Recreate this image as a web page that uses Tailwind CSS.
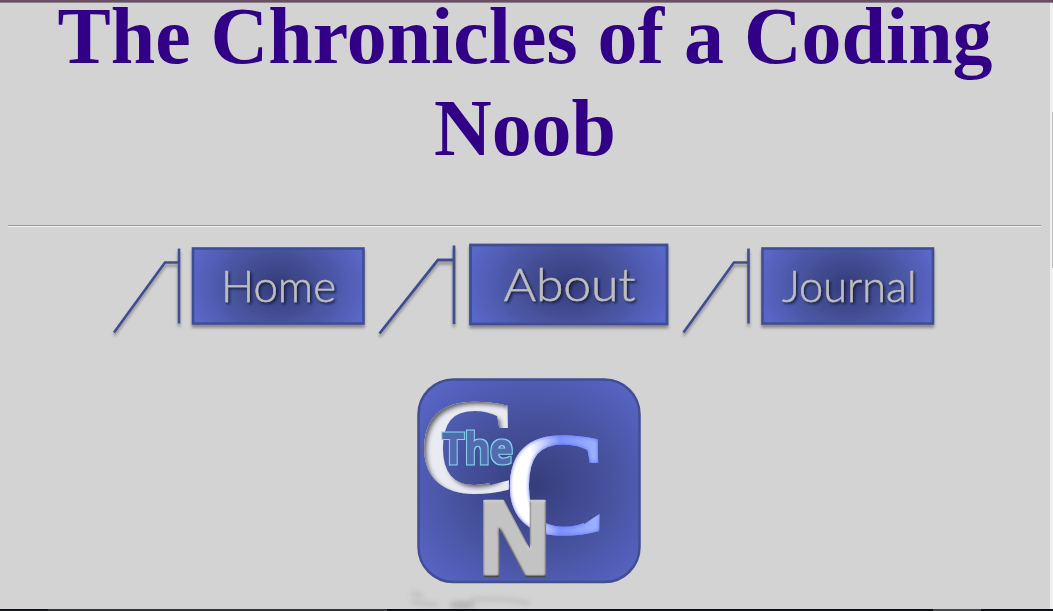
<!DOCTYPE html>
<html lang="en">
<head>
<meta charset="utf-8">
<title>The Chronicles of a Coding Noob</title>
<script src="https://cdn.jsdelivr.net/npm/@tailwindcss/browser@4"></script>
</head>
<body class="h-[611px] overflow-hidden bg-[#d3d3d3] flex flex-col">
<div class="h-[3px] shrink-0 bg-[#694f64] border-b border-[#8c7f8b]"></div>
<div class="flex h-[606px] shrink-0">
<main class="flex-1 flex flex-col">
<h1 class="h-[222px] shrink-0 px-2 -mt-[13px] text-center text-[79.9px] leading-[92px] font-bold text-[#310087] font-['Liberation_Serif',serif]">The Chronicles of a Coding Noob</h1>
<hr class="mt-[13px] ml-2 mr-[9px] h-[2px] shrink-0 border-0 border-t border-t-[#9a9a9a] bg-[#eeeeee]">
<nav class="mt-[8px] ml-[100px] h-[110px] shrink-0 flex">
<svg class="w-[270px] h-[110px] shrink-0" viewBox="100 235 270 110">
<defs>
<radialGradient id="g" cx=".5" cy=".5" r=".53" gradientTransform="translate(0 -.4) scale(1 1.8)"><stop offset="0" stop-color="#343b7b"/><stop offset=".45" stop-color="#455097"/><stop offset="1" stop-color="#5967c8"/></radialGradient>
<filter id="s" x="-20%" y="-20%" width="140%" height="150%"><feDropShadow dx="0" dy="3" stdDeviation="1.5" flood-opacity=".35"/></filter>
<filter id="t" x="-20%" y="-20%" width="140%" height="150%"><feDropShadow dx="1.8" dy="1.8" stdDeviation=".9" flood-color="#111633" flood-opacity=".85"/></filter>
</defs>
<g fill="none" stroke="#414e93" stroke-width="2.6" filter="url(#s)"><path d="M114 332.500L165 262.500H179M179 248.500V323.500"/><rect x="193" y="248.500" width="170.500" height="75" fill="url(#g)"/></g>
<text x="221" y="301.500" font-family="Lato, sans-serif" font-weight="300" font-size="44" textLength="115" lengthAdjust="spacingAndGlyphs" fill="#bebebe" stroke="#bebebe" stroke-width=".5" filter="url(#t)">Home</text>
</svg>
<svg class="w-[305px] h-[110px] shrink-0" viewBox="370 235 305 110">
<g fill="none" stroke="#414e93" stroke-width="2.800" filter="url(#s)"><path d="M379.500 333.500L438 260H454M454 245.500V324"/><rect x="470.500" y="245" width="196.500" height="79" fill="url(#g)"/></g>
<text x="503.500" y="301" font-family="Lato, sans-serif" font-weight="300" font-size="46" textLength="132" lengthAdjust="spacingAndGlyphs" fill="#bebebe" stroke="#bebebe" stroke-width=".5" filter="url(#t)">About</text>
</svg>
<svg class="w-[275px] h-[110px] shrink-0" viewBox="675 235 275 110">
<g fill="none" stroke="#414e93" stroke-width="2.600" filter="url(#s)"><path d="M683.500 332.500L734 262.500H748.500M748.500 248.500V323.500"/><rect x="762.500" y="248.500" width="170.500" height="75" fill="url(#g)"/></g>
<text x="782" y="301.500" font-family="Lato, sans-serif" font-weight="300" font-size="44" textLength="134.500" lengthAdjust="spacingAndGlyphs" fill="#bebebe" stroke="#bebebe" stroke-width=".5" filter="url(#t)">Journal</text>
</svg>
</nav>
<svg class="mt-[25px] ml-[405px] w-[250px] h-[239px] shrink-0" viewBox="405 370 250 239">
<defs>
<radialGradient id="e" cx=".52" cy=".52" r=".68"><stop offset="0" stop-color="#363d7b"/><stop offset=".5" stop-color="#47529e"/><stop offset="1" stop-color="#5967c8"/></radialGradient>
<linearGradient id="c" gradientUnits="userSpaceOnUse" x1="0" y1="0" x2="95" y2="0"><stop offset="0" stop-color="#fff"/><stop offset=".25" stop-color="#fff"/><stop offset=".55" stop-color="#7d91ff"/><stop offset="1" stop-color="#a6b8ff"/></linearGradient>
<clipPath id="k1"><path clip-rule="evenodd" d="M405 370H655V609H405ZM488 450H514V479L490 485Z"/></clipPath>
<clipPath id="k2"><path clip-rule="evenodd" d="M405 370H655V609H405ZM574 490H604V511L584 524Z"/></clipPath>
<filter id="in" x="-10%" y="-10%" width="120%" height="120%"><feOffset in="SourceAlpha" dx="2.500" dy="2.500"/><feGaussianBlur stdDeviation="2" result="b"/><feComposite in="SourceAlpha" in2="b" operator="out" result="i"/><feFlood flood-color="#33333b" flood-opacity=".9"/><feComposite in2="i" operator="in" result="d"/><feMerge><feMergeNode in="SourceGraphic"/><feMergeNode in="d"/></feMerge></filter>
<filter id="gl" x="-10%" y="-10%" width="120%" height="120%"><feGaussianBlur in="SourceAlpha" stdDeviation="2.500" result="b"/><feComponentTransfer in="b" result="c"><feFuncA type="linear" slope="-1.500" intercept="1.400"/></feComponentTransfer><feFlood flood-color="#647cff"/><feComposite in2="c" operator="in"/><feComposite in2="SourceAlpha" operator="in" result="d"/><feMerge><feMergeNode in="SourceGraphic"/><feMergeNode in="d"/></feMerge></filter>
<filter id="bev" x="-10%" y="-10%" width="120%" height="120%" color-interpolation-filters="sRGB"><feGaussianBlur in="SourceAlpha" stdDeviation="1.100" result="b"/><feDiffuseLighting in="b" surfaceScale="2" diffuseConstant="1.080" lighting-color="#fff" result="l"><feDistantLight azimuth="260" elevation="65"/></feDiffuseLighting><feComposite in="l" in2="SourceGraphic" operator="arithmetic" k1="1" result="m"/><feComposite in="m" in2="SourceAlpha" operator="in"/></filter>
<filter id="out" x="-10%" y="-10%" width="120%" height="120%"><feMorphology in="SourceAlpha" operator="dilate" radius="1" result="o"/><feFlood flood-color="#83d4ee"/><feComposite in2="o" operator="in" result="p"/><feMerge><feMergeNode in="p"/><feMergeNode in="SourceGraphic"/></feMerge></filter>
<filter id="bl" x="-20%" y="-50%" width="140%" height="200%"><feGaussianBlur stdDeviation="2.500"/></filter>
</defs>
<rect x="418.500" y="379.500" width="221" height="202.500" rx="35" fill="url(#e)" stroke="#414e93" stroke-width="2.500"/>
<g clip-path="url(#k1)"><text transform="translate(420.500 490.500) scale(1.080 1)" font-family="Liberation Serif" font-size="131" fill="#e9eaf2" stroke="#e9eaf2" stroke-width="4" filter="url(#in)">C</text></g>
<g clip-path="url(#k2)"><text transform="translate(505.500 532.500) scale(1.040 1)" font-family="Liberation Serif" font-size="145" fill="url(#c)" stroke="url(#c)" stroke-width="3.500" filter="url(#gl)">C</text></g>
<text x="442" y="464" font-family="Open Sans" font-weight="700" font-size="43" textLength="71" lengthAdjust="spacingAndGlyphs" fill="#526bae" stroke="#526bae" stroke-width="1" filter="url(#out)">The</text>
<text transform="translate(476.500 574.500) scale(.92 1)" font-family="Open Sans" font-weight="700" font-size="102" stroke-linejoin="round" fill="#c8c8c8" stroke="#c8c8c8" stroke-width="4.500" filter="url(#bev)">N</text>
<g fill="none" stroke="#777" stroke-opacity=".22" filter="url(#bl)"><path stroke-width="4" d="M411 593L423 596M411 602L438 605M470 600Q490 597 530 603"/><ellipse cx="462" cy="605" rx="13" ry="4" fill="#888" fill-opacity=".4" stroke="none"/></g>
</svg>
</main>
<aside class="w-[3px] shrink-0 bg-[#f0f0f0] pt-[109px] pl-[2px]"><div class="h-[156px] bg-[#c1c1c1]"></div></aside>
</div>
<footer class="flex h-[2px] shrink-0 bg-[#0b0d10]"><div class="w-[48px] bg-[#111316]"></div><div class="w-[339px] bg-[#303234]"></div><div class="ml-[546px] w-[48px] bg-[#444648]"></div></footer>
</body>
</html>
